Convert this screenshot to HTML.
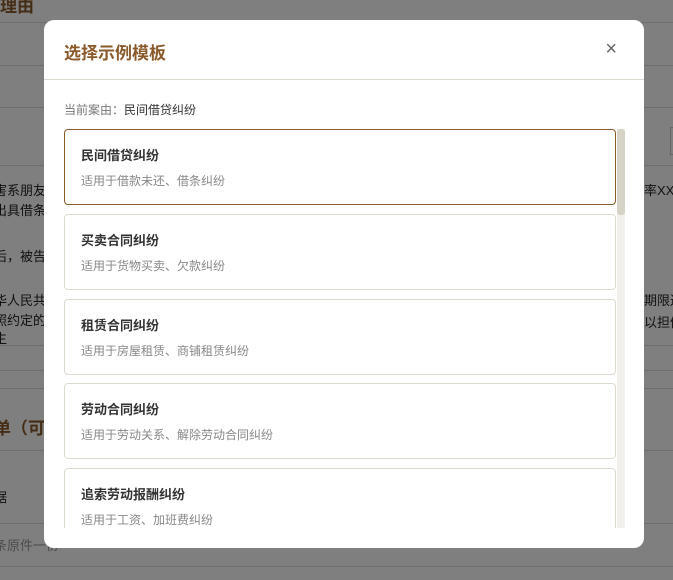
<!DOCTYPE html>
<html><head><meta charset="utf-8"><style>
*{margin:0;padding:0;box-sizing:border-box}
body{width:673px;height:580px;overflow:hidden;position:relative;background:#fff;font-family:"Liberation Sans","Noto Sans CJK SC",sans-serif}
.bg{position:absolute;color:#222;font-size:13px;white-space:nowrap}
.ln{position:absolute;left:0;right:0;height:1px;background:#ddd}
.ov{position:absolute;inset:0;background:rgba(0,0,0,0.5)}
.modal{position:absolute;left:44px;top:20px;width:600px;height:528px;background:#fff;border-radius:10px;overflow:hidden}
.hd{height:60px;border-bottom:1px solid #ddd9cf;position:relative}
.hd h2{position:absolute;left:20px;top:19px;font-size:17px;color:#8b5a2b;font-weight:bold}
.x{position:absolute;right:27px;top:19px;font-size:20px;color:#666;line-height:20px}
.cur{position:absolute;left:20px;top:81px;font-size:12px;color:#777}
.cur b{color:#333;font-weight:normal}
.list{position:absolute;left:20px;top:109px;width:552px;height:399px;overflow:hidden}
.card{height:76px;border:1px solid #ddd9cf;border-radius:4px;margin-bottom:8.75px;padding:15px 16px}
.card.on{border-color:#8b5a2b}
.card .t{font-size:13px;font-weight:bold;color:#333}
.card .d{font-size:12px;color:#888;margin-top:8px}
.sb{position:absolute;left:573px;top:109px;width:8px;height:399px;background:#f1f0ea}
.th{position:absolute;left:573px;top:109px;width:8px;height:86px;background:#d6d3c6;border-radius:3px}
</style></head><body>
<div class="bg" style="left:0;top:-8px;font-size:17px;font-weight:bold;color:#8b5a2b">理由</div>
<div class="ln" style="top:22px"></div>
<div class="ln" style="top:65px"></div>
<div class="ln" style="top:107px"></div>
<div class="ln" style="top:165px"></div>
<div class="bg" style="left:-6px;top:180px">害系朋友</div>
<div class="bg" style="left:-6px;top:200px">出具借条</div>
<div class="bg" style="left:-6px;top:246px">后，被告</div>
<div class="bg" style="left:-6px;top:290px">华人民共</div>
<div class="bg" style="left:-6px;top:310px">照约定的</div>
<div class="bg" style="left:-6px;top:328px">生</div>
<div class="ln" style="top:345px"></div>
<div class="ln" style="top:370px"></div>
<div class="ln" style="top:388px"></div>
<div class="bg" style="left:-6px;top:414px;font-size:17px;font-weight:bold;color:#8b5a2b">单（可选</div>
<div class="ln" style="top:450px"></div>
<div class="bg" style="left:-6px;top:487px">据</div>
<div class="ln" style="top:523px"></div>
<div class="bg" style="left:-6px;top:535px;color:#999">条原件一份</div>
<div class="ln" style="top:566px"></div>
<div class="bg" style="left:644px;top:180px">率XX%</div>
<div class="bg" style="left:644px;top:290px">期限返</div>
<div class="bg" style="left:644px;top:312px">以担偿</div>
<div style="position:absolute;left:670px;top:127px;width:10px;height:28px;border:1px solid #ccc"></div>
<div class="ov"></div>
<div class="modal">
<div class="hd"><h2>选择示例模板</h2><div class="x">×</div></div>
<div class="cur">当前案由：<b>民间借贷纠纷</b></div>
<div class="list">
<div class="card on"><div class="t">民间借贷纠纷</div><div class="d">适用于借款未还、借条纠纷</div></div>
<div class="card"><div class="t">买卖合同纠纷</div><div class="d">适用于货物买卖、欠款纠纷</div></div>
<div class="card"><div class="t">租赁合同纠纷</div><div class="d">适用于房屋租赁、商铺租赁纠纷</div></div>
<div class="card"><div class="t">劳动合同纠纷</div><div class="d">适用于劳动关系、解除劳动合同纠纷</div></div>
<div class="card"><div class="t">追索劳动报酬纠纷</div><div class="d">适用于工资、加班费纠纷</div></div>
</div>
<div class="sb"></div><div class="th"></div>
</div>
</body></html>
